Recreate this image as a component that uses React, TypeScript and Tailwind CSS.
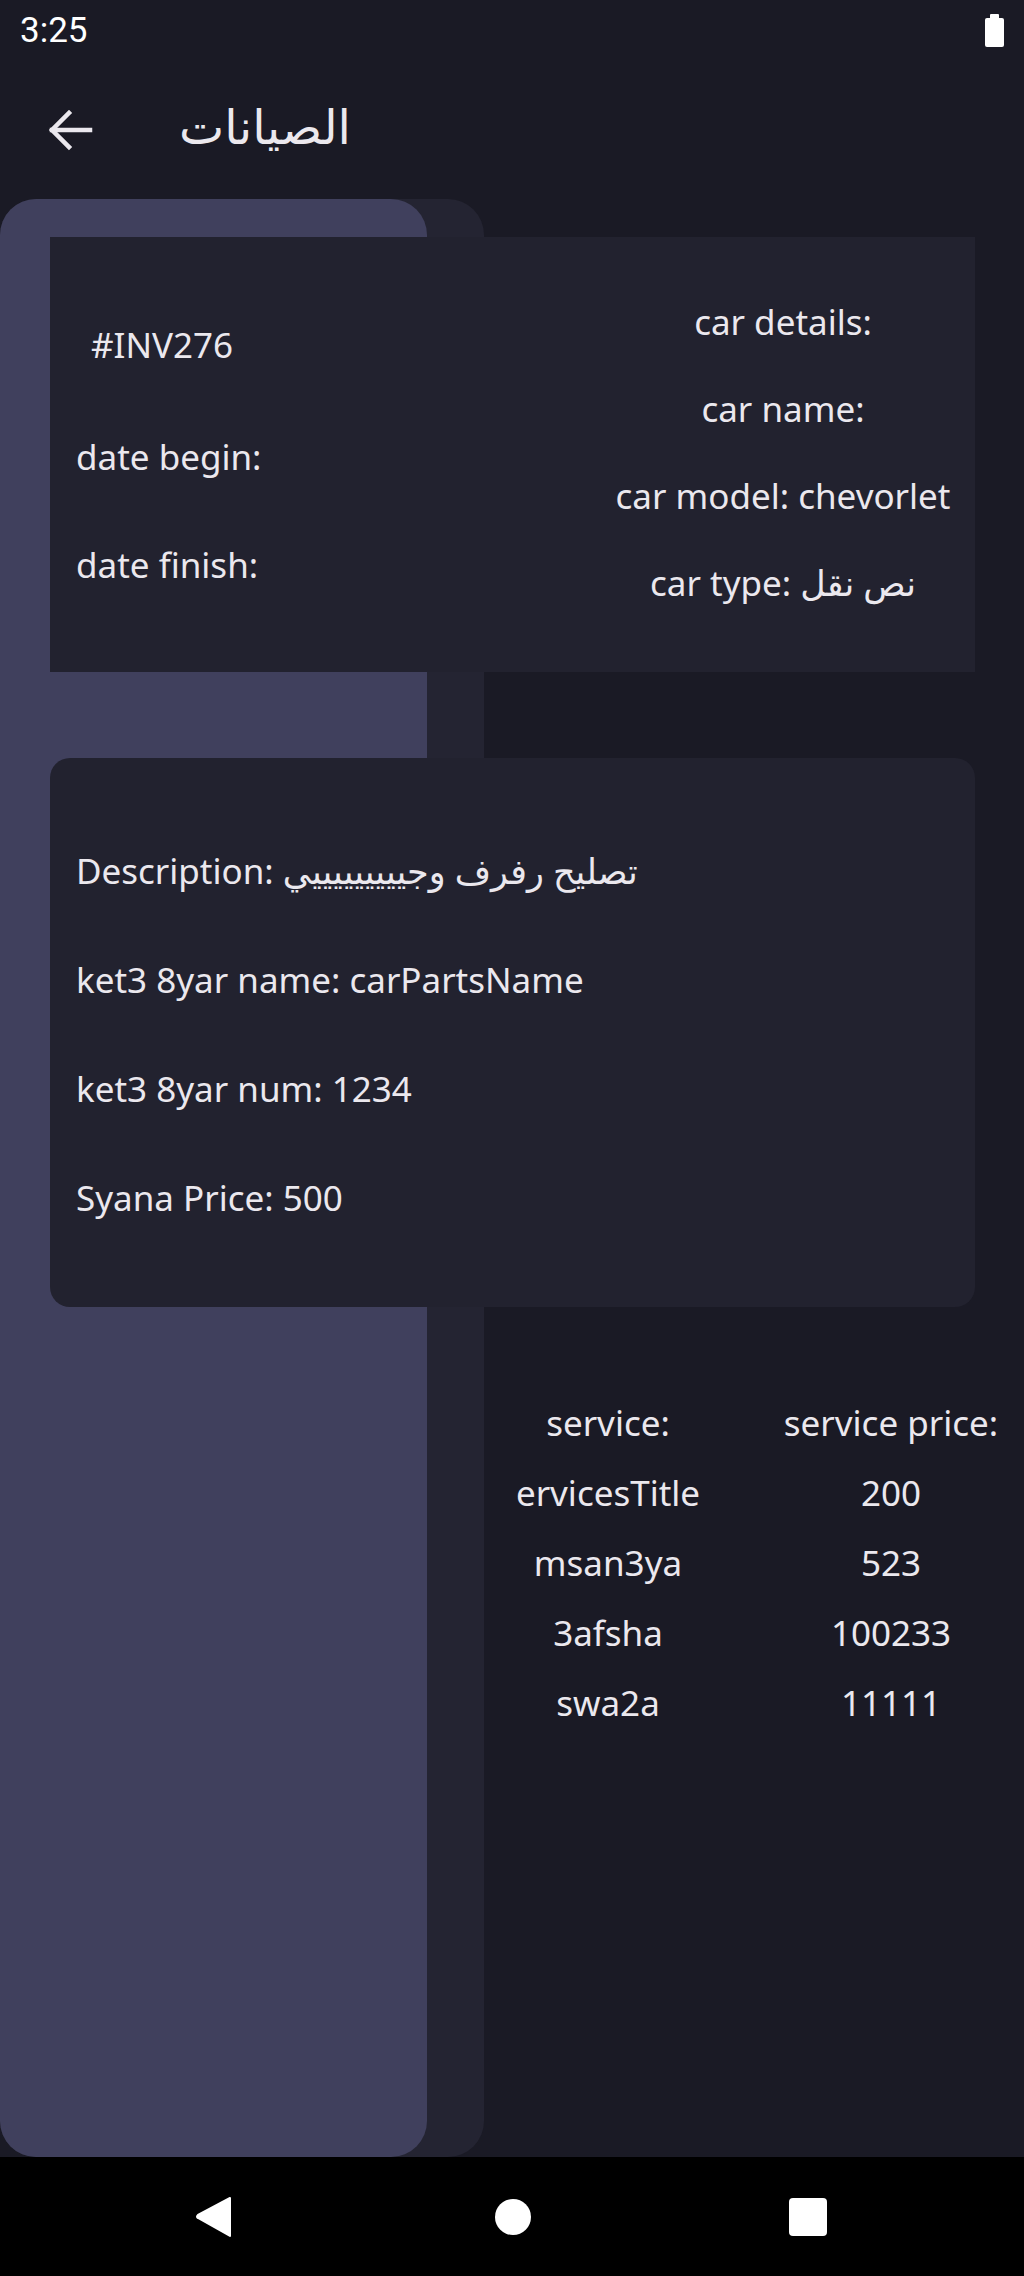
import { Fragment } from "react";

const FONT = { fontFamily: '"Noto Sans", "DejaVu Sans", sans-serif' };

const LEFT_INFO = ["date begin:", "date finish:"];
const CAR_INFO = ["car details:", "car name:", "car model: chevorlet", "car type: نص نقل"];
const DETAILS = [
  "Description: تصليح رفرف وجيييييييييي",
  "ket3 8yar name: carPartsName",
  "ket3 8yar num: 1234",
  "Syana Price: 500",
];
const SERVICES: [string, string][] = [
  ["ervicesTitle", "200"],
  ["msan3ya", "523"],
  ["3afsha", "100233"],
  ["swa2a", "11111"],
];

function StatusBar() {
  return (
    <div className="h-[60px] flex items-center justify-between pl-[20px] pr-[20px] shrink-0">
      <span className="text-[35px] leading-none text-white" style={{ fontFamily: "Roboto, sans-serif" }}>
        3:25
      </span>
      <div className="flex flex-col items-center">
        <div className="w-[9px] h-[4px] bg-white rounded-t-[1px]" />
        <div className="w-[19px] h-[29px] bg-white rounded-[2px]" />
      </div>
    </div>
  );
}

function Toolbar() {
  return (
    <div className="h-[139px] flex items-center shrink-0">
      <svg width="46" height="42" viewBox="0 0 46 42" className="ml-[47px]" fill="none" stroke="#ebe8ee" strokeWidth="4.5" strokeLinecap="square">
        <path d="M5 21H43" />
        <path d="M22 4L5 21L22 38" strokeLinejoin="miter" />
      </svg>
      <span className="ml-[86px] text-[48px] leading-none text-[#ebe8ee] -mt-[8px]">الصيانات</span>
    </div>
  );
}

function NavBar() {
  return (
    <div className="h-[119px] bg-black flex items-center shrink-0">
      <svg width="37" height="42" viewBox="0 0 37 42" className="ml-[195px]">
        <path d="M35 2 L35 40 L3 22 Q1 21 3 19 Z" fill="white" stroke="white" strokeWidth="2" strokeLinejoin="round" />
      </svg>
      <div className="ml-[263px] w-[36px] h-[36px] rounded-full bg-white" />
      <div className="ml-[258px] w-[38px] h-[38px] rounded-[4px] bg-white" />
    </div>
  );
}

export default function App() {
  return (
    <div className="w-[1024px] h-[2276px] flex flex-col bg-[#1a1a25] text-[#ebe8ee] overflow-hidden" style={FONT}>
      <StatusBar />
      <Toolbar />

      {/* stacked panels + content */}
      <div className="flex-1 grid">
        <div className="col-start-1 row-start-1 w-[484px] h-full rounded-[36px] bg-[#242432]" />
        <div className="col-start-1 row-start-1 w-[427px] h-full rounded-[36px] bg-[#40405d]" />

        <div className="col-start-1 row-start-1 flex flex-col pt-[38px] text-[35px]">
          {/* invoice card */}
          <div className="ml-[50px] w-[925px] h-[435px] bg-[#22222f] flex">
            <div className="flex-1 flex flex-col pl-[26px] pt-[86px]">
              <div className="h-[44px] flex items-center pl-[15px]">#INV276</div>
              <div className="h-[44px] flex items-center mt-[68px]">{LEFT_INFO[0]}</div>
              <div className="h-[44px] flex items-center mt-[64px]">{LEFT_INFO[1]}</div>
            </div>
            <div className="w-[380px] mr-[2px] flex flex-col items-center pt-[63px] gap-[43px]">
              {CAR_INFO.map((t) => (
                <div key={t} className="h-[44px] flex items-center whitespace-nowrap">
                  {t}
                </div>
              ))}
            </div>
          </div>

          {/* details card */}
          <div className="ml-[50px] mt-[86px] w-[925px] h-[549px] bg-[#22222f] rounded-[20px] flex flex-col pl-[26px] pt-[91px] gap-[65px]">
            {DETAILS.map((t) => (
              <div key={t} className="h-[44px] flex items-center whitespace-nowrap">
                {t}
              </div>
            ))}
          </div>

          {/* services table */}
          <div className="ml-[473px] mt-[94px] grid grid-cols-[270px_266px] gap-x-[15px] gap-y-[26px] text-center">
            <div className="h-[44px] flex items-center justify-center">service:</div>
            <div className="h-[44px] flex items-center justify-center whitespace-nowrap">service price:</div>
            {SERVICES.map(([name, price]) => (
              <Fragment key={name}>
                <div className="h-[44px] flex items-center justify-center">{name}</div>
                <div className="h-[44px] flex items-center justify-center">{price}</div>
              </Fragment>
            ))}
          </div>
        </div>
      </div>

      <NavBar />
    </div>
  );
}
